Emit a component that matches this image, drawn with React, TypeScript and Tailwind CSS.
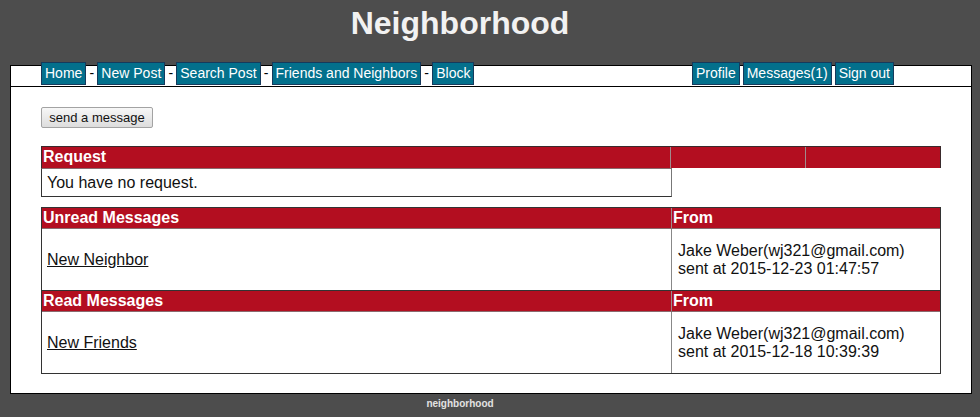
import React from 'react';

const NAV_LEFT = ['Home', 'New Post', 'Search Post', 'Friends and Neighbors', 'Block'];
const NAV_RIGHT = ['Profile', 'Messages(1)', 'Sign out'];

function NavButton({ label }: { label: string }) {
  return (
    <a className="block h-[23px] px-[3px] border border-[#163a5c] bg-[#03708c] text-white text-[14px] leading-[21px] cursor-pointer">
      {label}
    </a>
  );
}

function MessageSection({ title, subject, from, sent }: { title: string; subject: string; from: string; sent: string }) {
  return (
    <>
      <div className="flex h-[21px] bg-[#b30e20] text-white font-bold text-[16px] leading-[20px] border-b border-[#8a6a6e]">
        <div className="w-[630px] pl-[1px] border-r border-[#a08a8c]">{title}</div>
        <div className="flex-1 pl-[1px]">From</div>
      </div>
      <div className="flex h-[61px] text-[16px] text-[#111] leading-[18px]">
        <div className="w-[630px] pl-[5px] border-r border-[#888] flex items-center">
          <a className="underline cursor-pointer">{subject}</a>
        </div>
        <div className="flex-1 pl-[6px] flex flex-col justify-center">
          <span>{from}</span>
          <span>{sent}</span>
        </div>
      </div>
    </>
  );
}

export default function App() {
  return (
    <div className="w-[980px] h-[417px] bg-[#4d4d4d] overflow-hidden font-['Liberation_Sans',Arial,sans-serif]">
      {/* Title */}
      <div className="w-[920px] h-[65px] pt-[5px] text-center text-[32px] leading-[37px] font-bold text-[#f2f2f2]">
        Neighborhood
      </div>

      {/* Main panel */}
      <div className="ml-[10px] w-[962px] h-[329px] bg-white border border-black">
        {/* Nav */}
        <div className="h-[21px] border-b border-black flex justify-between pl-[30px] pr-[77px]">
          <div className="flex -mt-[4px]">
            {NAV_LEFT.map((label, i) => (
              <React.Fragment key={label}>
                {i > 0 && (
                  <span className="w-[11px] text-center text-[14px] leading-[23px] text-black">-</span>
                )}
                <NavButton label={label} />
              </React.Fragment>
            ))}
          </div>
          <div className="flex gap-[3px] -mt-[4px]">
            {NAV_RIGHT.map((label) => (
              <NavButton key={label} label={label} />
            ))}
          </div>
        </div>

        <div className="pl-[30px] pt-[20px]">
          <button className="block h-[21px] w-[112px] text-[13px] leading-[19px] text-[#111] bg-gradient-to-b from-[#f7f7f7] to-[#dddddd] border border-[#a3a3a3] rounded-[2px]">
            send a message
          </button>

          {/* Request */}
          <div className="mt-[18px] w-[900px]">
            <div className="flex h-[22px] bg-[#b30e20] border-t border-x border-[#3a2a2c] text-white font-bold text-[16px] leading-[20px]">
              <div className="w-[629px] pl-[1px] border-r border-[#a08a8c]">Request</div>
              <div className="w-[135px] border-r border-[#a08a8c]" />
              <div className="flex-1" />
            </div>
            <div className="w-[631px] h-[29px] border-x border-y border-t-[#8a6a6e] border-b-[#333] border-l-[#333] border-r-[#777] flex items-center pl-[5px] text-[16px] text-[#111]">
              You have no request.
            </div>
          </div>

          {/* Messages */}
          <div className="mt-[10px] w-[900px] border border-[#333]">
            <MessageSection
              title="Unread Messages"
              subject="New Neighbor"
              from="Jake Weber(wj321@gmail.com)"
              sent="sent at 2015-12-23 01:47:57"
            />
            <div className="border-t border-[#333]" />
            <MessageSection
              title="Read Messages"
              subject="New Friends"
              from="Jake Weber(wj321@gmail.com)"
              sent="sent at 2015-12-18 10:39:39"
            />
          </div>
        </div>
      </div>

      {/* Footer */}
      <div className="w-[920px] mt-[4px] text-center text-[10px] leading-[12px] font-bold text-[#e2e2e2]">
        neighborhood
      </div>
    </div>
  );
}
